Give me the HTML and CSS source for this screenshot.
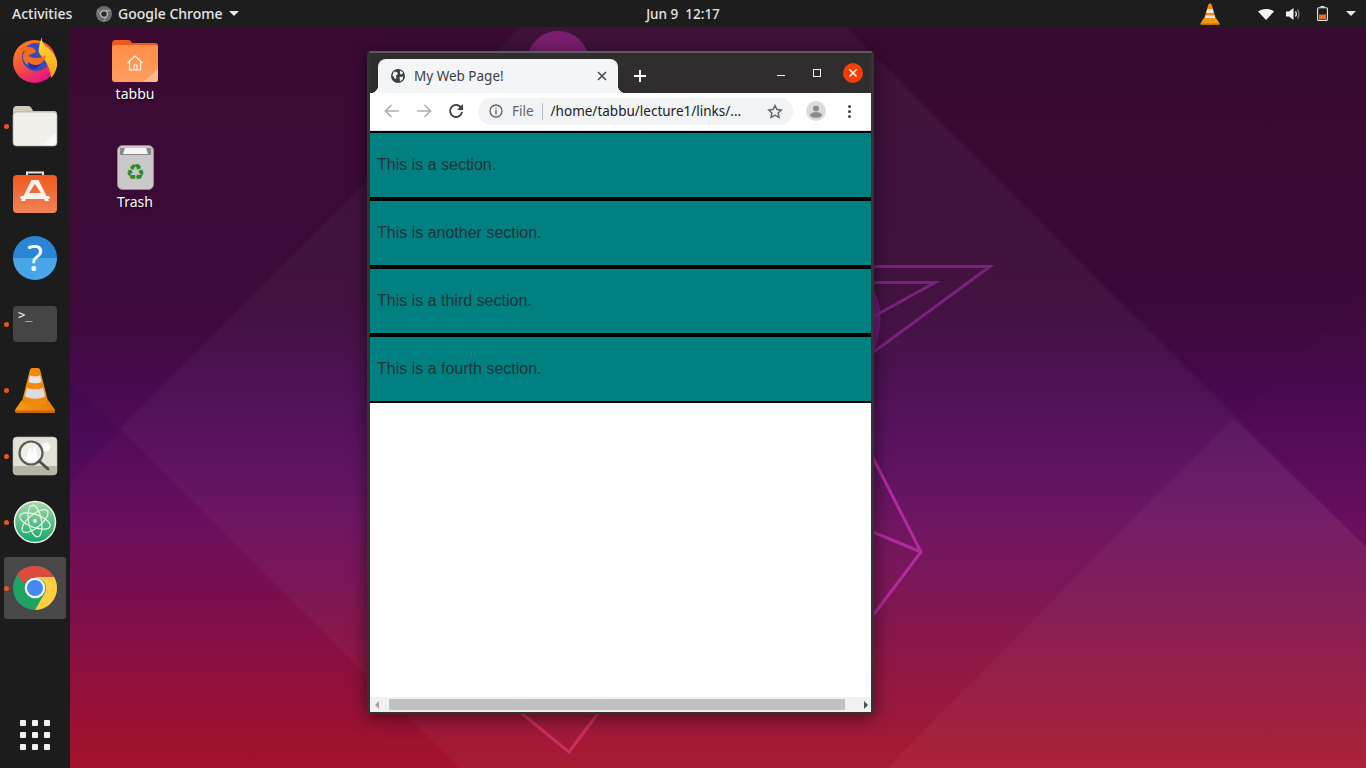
FILE: index.html
```html
<!DOCTYPE html>
<html lang="en">
<head>
<meta charset="UTF-8">
<meta name="viewport" content="width=device-width, initial-scale=1.0">
<title>My Web Page!</title>
<link rel="stylesheet" href="styles.css">
</head>
<body>
  <div class="screen">
    <!-- Top bar -->
    <header class="topbar">
      <div class="topbar-left">
        <span class="activities">Activities</span>
        <span class="app-menu">
          <svg class="app-menu-icon" width="16" height="16" viewBox="0 0 16 16">
            <circle cx="8" cy="8" r="8" fill="#6d6d6d"/>
            <circle cx="8" cy="8" r="3.4" fill="#2a2a2a" stroke="#c4c4c4" stroke-width="1.2"/>
            <path d="M8 4.6H15M5 9.7L1.6 3.6M11 9.7L7.6 15.8" stroke="#a8a8a8" stroke-width="1" fill="none"/>
          </svg>
          Google Chrome
          <span class="caret"></span>
        </span>
      </div>
      <div class="clock">Jun 9&nbsp;&nbsp;12:17</div>
      <div class="tray">
        <svg class="tray-vlc" width="20" height="22" viewBox="0 0 40 44">
          <path d="M20 1c2 0 3 1 3.5 3L32 32H8L16.500 4C17 2 18 1 20 1z" fill="#f08a0c"/>
          <path d="M14.500 12h11l2 8h-15zM11 25h18l1.500 5h-21z" fill="#e8e8e8"/>
          <path d="M7 31h26l6 10c.5 1 0 2-1 2H2c-1 0-1.500-1-1-2z" fill="#f39a12"/>
          <path d="M1 41h38l-1 3H2z" fill="#c76a08"/>
        </svg>
        <svg class="tray-wifi" width="16" height="12" viewBox="0 0 16 12"><path d="M0 3.500C4 0 12 0 16 3.500L8 12z" fill="#f2f2f2"/></svg>
        <svg class="tray-sound" width="15" height="14" viewBox="0 0 15 14">
          <path d="M0 4.500h3L7.500 1v12L3 9.500H0z" fill="#f2f2f2"/>
          <path d="M9.500 4.500c1 1.500 1 3.500 0 5" stroke="#f2f2f2" stroke-width="1.300" fill="none"/>
          <path d="M11.500 2.500c2 2.500 2 6.500 0 9" stroke="#8a8a8a" stroke-width="1.200" fill="none"/>
        </svg>
        <svg class="tray-battery" width="11" height="15" viewBox="0 0 11 15">
          <path d="M3.500 0h4v1.500h-4z" fill="#e8e8e8"/>
          <rect x=".6" y="1.800" width="9.800" height="12.600" rx="1" fill="none" stroke="#e8e8e8" stroke-width="1.100"/>
          <rect x="2" y="8.500" width="7" height="4.500" fill="#ee6a2c"/>
        </svg>
        <span class="caret tray-caret"></span>
      </div>
    </header>

    <div class="main">
      <!-- Dock -->
      <nav class="dock">
        <div class="dock-item">
          <svg width="46" height="46" viewBox="0 0 46 46">
            <defs>
              <linearGradient id="foxBody" x1="0" y1="0" x2=".6" y2="1">
                <stop offset="0" stop-color="#ff8a1f"/><stop offset=".55" stop-color="#f8503c"/><stop offset="1" stop-color="#e31587"/>
              </linearGradient>
              <linearGradient id="foxFlame" x1="0" y1="0" x2="0" y2="1">
                <stop offset="0" stop-color="#ffe32e"/><stop offset="1" stop-color="#ff9a1a"/>
              </linearGradient>
            </defs>
            <circle cx="22.500" cy="24.500" r="21.500" fill="url(#foxBody)"/>
            <circle cx="24" cy="20" r="14" fill="#3c49b8"/>
            <path d="M30 0c-1 5 2 8 7 12 6 5 9 11 8 17-1 5-3 9-6 12 0-2-2-14-8-20-3-3-5-6-4-10 .5-4 1.500-8 3-11z" fill="url(#foxFlame)"/>
            <path d="M4 8l3 5c3-3 7-4 11-3 4 1 6 3 6 5l-7 3c0 2 3 3 7 3 5 0 8-1 10-3-1 6-6 11-13 11-6 0-10-4-10-9 0-3 1-5 3-6-3 1-7 0-10-6z" fill="#f36b21"/>
            <path d="M16 25c3 3 8 4 13 2-2 3-4 5-8 5-3 0-5-3-5-7z" fill="#1e2fa8"/>
          </svg>
        </div>
        <div class="dock-item running">
          <svg width="46" height="42" viewBox="0 0 46 42">
            <path d="M1 5c0-2 1-4 4-4h11c2 0 3 1 4 3l1 2h21c2 0 3 1 3 3v6H1z" fill="#cfccbe"/>
            <rect x="1" y="7" width="44" height="34" rx="3.500" fill="#f2f0ea" stroke="#a9a798" stroke-width=".7"/>
            <path d="M44 28v9c0 2-1 3-3 3H30z" fill="#fbfaf8"/>
          </svg>
        </div>
        <div class="dock-item">
          <svg width="46" height="42" viewBox="0 0 46 42">
            <defs>
              <linearGradient id="shopBag" x1="0" y1="0" x2="0" y2="1">
                <stop offset="0" stop-color="#ef5a1e"/><stop offset="1" stop-color="#f08356"/>
              </linearGradient>
            </defs>
            <path d="M15 5V1.500h16V5" fill="none" stroke="#f2ddd2" stroke-width="2"/>
            <rect x="1" y="4" width="44" height="38" rx="4" fill="url(#shopBag)"/>
            <path d="M23 9l3.500 0L37 30h-4l-2-5H15l-2 5H9L19.500 9zM22.800 13L17 22h12z" fill="#fdf3ee"/>
            <rect x="8" y="25" width="30" height="3" rx="1.500" fill="#fdf3ee"/>
          </svg>
        </div>
        <div class="dock-item">
          <span class="help-icon">?</span>
        </div>
        <div class="dock-item running">
          <span class="terminal-icon">&gt;_</span>
        </div>
        <div class="dock-item running">
          <svg width="42" height="46" viewBox="0 0 40 44">
            <defs>
              <linearGradient id="coneBase" x1="0" y1="0" x2="1" y2="0">
                <stop offset="0" stop-color="#f59c14"/><stop offset="1" stop-color="#ee7a05"/>
              </linearGradient>
            </defs>
            <path d="M7 32h26l6 9c.5 1 0 1.500-1 1.500H2c-1 0-1.500-.5-1-1.500z" fill="url(#coneBase)"/>
            <path d="M1 41.500h38V43c0 .5-.5 1-1 1H2c-.5 0-1-.5-1-1z" fill="#c4670a"/>
            <path d="M17 1h6c1 0 1.500 1 2 2l7 28c.5 4-5 6-12 6S7 35 8 31l7-28c.5-1 1-2 2-2z" fill="#f08a0c"/>
            <path d="M15.200 8c2 1.500 7.500 1.500 9.600 0l1.400 6c-3 2-9.400 2-12.400 0z" fill="#e6e6e6"/>
            <path d="M12.300 19.500c3 2.500 12.400 2.500 15.400 0l2 8.500c-4 3-15.400 3-19.400 0z" fill="#dcdcdc"/>
          </svg>
        </div>
        <div class="dock-item running">
          <svg width="46" height="40" viewBox="0 0 46 40">
            <rect x="1" y="1" width="44" height="38" rx="4" fill="#e4e2d8" stroke="#bdbbae" stroke-width=".6"/>
            <path d="M1 30h44v5c0 2-2 4-4 4H5c-2 0-4-2-4-4z" fill="#b8b5a6"/>
            <circle cx="34" cy="11" r="4.500" fill="#fafaf6"/>
            <circle cx="19" cy="17" r="11.500" fill="#efeee8" stroke="#5a5a58" stroke-width="2.200"/>
            <path d="M13 25l5-14 2 7 3-9 3 16z" fill="#fff"/>
            <path d="M27 25l9 8" stroke="#4e4e4c" stroke-width="3" stroke-linecap="round"/>
          </svg>
        </div>
        <div class="dock-item running">
          <svg width="44" height="44" viewBox="0 0 44 44">
            <defs>
              <linearGradient id="atomBg" x1="0" y1="0" x2="0" y2="1">
                <stop offset="0" stop-color="#a8d9a4"/><stop offset="1" stop-color="#10a66d"/>
              </linearGradient>
            </defs>
            <circle cx="22" cy="22" r="20.500" fill="url(#atomBg)" stroke="#eef2ee" stroke-width="1.500"/>
            <g fill="none" stroke="#e8f5ea" stroke-width="1.200">
              <ellipse cx="22" cy="21" rx="16" ry="6.500" transform="rotate(20 22 21)"/>
              <ellipse cx="22" cy="21" rx="16" ry="6.500" transform="rotate(80 22 21)"/>
              <ellipse cx="22" cy="21" rx="16" ry="6.500" transform="rotate(140 22 21)"/>
            </g>
            <circle cx="22" cy="21" r="2" fill="#e8f5ea"/>
          </svg>
        </div>
        <div class="dock-item running active">
          <svg width="44" height="44" viewBox="0 0 44 44">
            <circle cx="22" cy="22" r="22" fill="#1ea362"/>
            <path d="M22 0a22 22 0 0 1 19.050 11H22a11 11 0 0 0-10.500 7.500L4 8.300A22 22 0 0 1 22 0z" fill="#dd4b3e"/>
            <path d="M41.050 11A22 22 0 0 1 22 44l9.500-16.500A11 11 0 0 0 29.800 14.300L22 11z" fill="#ffcd40"/>
            <circle cx="22" cy="22" r="10.300" fill="#f5f5f5"/>
            <circle cx="22" cy="22" r="8" fill="#4688f1"/>
          </svg>
        </div>
        <div class="apps-grid">
          <span></span><span></span><span></span>
          <span></span><span></span><span></span>
          <span></span><span></span><span></span>
        </div>
      </nav>

      <!-- Desktop -->
      <main class="desktop">
        <svg class="wallpaper" width="1296" height="741" viewBox="70 27 1296 741">
          <defs>
            <linearGradient id="wallBase" gradientUnits="userSpaceOnUse" x1="0" y1="27" x2="0" y2="768">
              <stop offset="0" stop-color="#3a0a33"/>
              <stop offset=".37" stop-color="#3d0a3a"/>
              <stop offset=".48" stop-color="#480a4e"/>
              <stop offset=".57" stop-color="#560b5b"/>
              <stop offset=".66" stop-color="#680e5e"/>
              <stop offset=".77" stop-color="#7a0f4e"/>
              <stop offset=".88" stop-color="#90103c"/>
              <stop offset="1" stop-color="#a5122b"/>
            </linearGradient>
          </defs>
          <rect x="70" y="27" width="1296" height="741" fill="url(#wallBase)"/>
          <polygon points="846,27 1366,27 1366,292 1233,422" fill="#000" opacity=".02"/>
          <polygon points="520,27 846,27 1366,547 1366,768 459,768 120,429" fill="#fff" opacity=".035"/>
          <polygon points="1233,418 1366,547 1366,768 887,768" fill="#fff" opacity=".035"/>
          <polygon points="70,380 120,429 70,483" fill="#1a0a50" opacity=".12"/>
          <ellipse cx="558" cy="62" rx="31" ry="31" fill="#7a1e6e"/>
          <path d="M860 270C880 290 888 320 872 356H860z" fill="#6c1a74"/>
          <g fill="none" stroke-width="3">
            <path d="M860 266.500H990L860 362" stroke="#7a2180"/>
            <path d="M860 282.500H935L860 324" stroke="#7a2180"/>
            <path d="M868 448L921 552 868 622" stroke="#b02c9e"/>
            <path d="M868 530L921 552" stroke="#b02c9e"/>
            <path d="M520 712L569 752 599 712" stroke="#cb2d5c"/>
          </g>
        </svg>

        <div class="desk-icon desk-home">
          <svg width="46" height="42" viewBox="0 0 46 42">
            <defs>
              <linearGradient id="homeFolder" x1="0" y1="0" x2="0" y2="1">
                <stop offset="0" stop-color="#fe8f47"/><stop offset="1" stop-color="#ff9e60"/>
              </linearGradient>
            </defs>
            <path d="M0 4c0-2 1-4 3-4h13c2 0 3 1 4 3h23c2 0 3 1 3 3v10H0z" fill="#f2591c"/>
            <rect y="5" width="46" height="37" rx="3" fill="url(#homeFolder)"/>
            <path d="M46 29v10c0 2-1 3-3 3H31z" fill="#ffb98c"/>
            <path d="M15.500 23L23 16l7.500 7M17.500 21.500V30h11v-8.500M22 30v-5h3v5" fill="none" stroke="#fff3ea" stroke-width="1.200"/>
          </svg>
          <span class="desk-label">tabbu</span>
        </div>
        <div class="desk-icon desk-trash">
          <svg width="37" height="45" viewBox="0 0 37 45">
            <rect x=".5" y=".5" width="36" height="44" rx="5" fill="#c9c9c9" stroke="#8c8c8c"/>
            <path d="M3 3h31v7H3z" fill="#888"/>
            <path d="M6 9l2-6h21l2 6z" fill="#f5f5f5"/>
            <text class="trash-mark" x="18.500" y="35" text-anchor="middle">♻</text>
          </svg>
          <span class="desk-label">Trash</span>
        </div>

        <!-- Chrome window -->
        <section class="window">
          <div class="tabbar">
            <div class="tab">
              <svg width="14" height="14" viewBox="0 0 14 14">
                <circle cx="7" cy="7" r="7" fill="#3c4043"/>
                <path d="M3 2.500l3 .5 1 2-2 1.500L5.500 9 4 10 1.500 6zM9 1.500l3 2-1 2-2-.5zM8.500 8l3.500-.5 0 2.500-3 2.500z" fill="#f3f5f7"/>
              </svg>
              <span class="tab-title">My Web Page!</span>
              <svg class="tab-close" width="10" height="10" viewBox="0 0 10 10"><path d="M1 1l8 8M9 1l-8 8" stroke="#444" stroke-width="1.500"/></svg>
            </div>
            <svg class="new-tab" width="12" height="12" viewBox="0 0 12 12"><path d="M6 0v12M0 6h12" stroke="#fff" stroke-width="2"/></svg>
            <div class="win-controls">
              <span class="win-min"></span>
              <span class="win-max"></span>
              <span class="win-close">
                <svg width="10" height="10" viewBox="0 0 10 10"><path d="M1.500 1.500l7 7M8.500 1.500l-7 7" stroke="#fff" stroke-width="1.500"/></svg>
              </span>
            </div>
          </div>

          <div class="toolbar">
            <span class="tool-btn">
              <svg width="16" height="14" viewBox="0 0 16 14"><path d="M15 7H2M7.500 1L1.500 7l6 6" fill="none" stroke="#aeb0b3" stroke-width="1.700"/></svg>
            </span>
            <span class="tool-btn">
              <svg width="16" height="14" viewBox="0 0 16 14"><path d="M1 7h13M8.500 1l6 6-6 6" fill="none" stroke="#aeb0b3" stroke-width="1.700"/></svg>
            </span>
            <span class="tool-btn">
              <svg width="16" height="16" viewBox="0 0 16 16"><path d="M13.300 5A6 6 0 1 0 14 9" fill="none" stroke="#3c4043" stroke-width="1.800"/><path d="M15 1v6H9z" fill="#3c4043"/></svg>
            </span>
            <div class="omnibox">
              <svg width="14" height="14" viewBox="0 0 14 14">
                <circle cx="7" cy="7" r="6" fill="none" stroke="#5f6368" stroke-width="1.300"/>
                <path d="M7 6v4.500M7 3.500v1.300" stroke="#5f6368" stroke-width="1.400"/>
              </svg>
              <span class="omni-scheme">File</span>
              <span class="omni-url">/home/tabbu/lecture1/links/...</span>
              <svg class="omni-star" width="16" height="15" viewBox="0 0 16 15"><path d="M8 1.500l1.900 4 4.400.5-3.200 3 .9 4.400L8 11.200 4 13.400l.9-4.400-3.200-3 4.400-.5z" fill="none" stroke="#5f6368" stroke-width="1.400"/></svg>
            </div>
            <span class="avatar">
              <svg width="20" height="20" viewBox="0 0 20 20">
                <circle cx="10" cy="10" r="10" fill="#dcdcdc"/>
                <circle cx="10" cy="7.500" r="3" fill="#8e8e8e"/>
                <ellipse cx="10" cy="14" rx="6" ry="3" fill="#8e8e8e"/>
              </svg>
            </span>
            <span class="menu-dots"><i></i><i></i><i></i></span>
          </div>

          <div class="page">
            <div class="section">This is a section.</div>
            <div class="section">This is another section.</div>
            <div class="section">This is a third section.</div>
            <div class="section">This is a fourth section.</div>
          </div>

          <div class="hscroll">
            <span class="arrow-left"></span>
            <span class="hscroll-thumb"></span>
            <span class="arrow-right"></span>
          </div>
        </section>
      </main>
    </div>
  </div>
</body>
</html>
```

FILE: styles.css
```css
html, body {
  margin: 0;
  padding: 0;
}

body {
  width: 1366px;
  height: 768px;
  overflow: hidden;
  font-family: "Noto Sans", sans-serif;
  background: #1c1c1c;
}

.screen {
  display: flex;
  flex-direction: column;
  height: 768px;
}

/* Top bar */
.topbar {
  display: grid;
  grid-template-columns: 1fr auto 1fr;
  align-items: center;
  height: 27px;
  flex: none;
  background: #1d1d1d;
  color: #e6e6e6;
  font-size: 14px;
  font-weight: 500;
}

.topbar-left {
  display: flex;
  align-items: center;
  padding-left: 12px;
}

.activities {
  width: 84px;
}

.app-menu {
  display: flex;
  align-items: center;
  gap: 6px;
}

.caret {
  width: 0;
  height: 0;
  margin-left: 0;
  border-left: 5px solid transparent;
  border-right: 5px solid transparent;
  border-top: 5px solid #e6e6e6;
}

.clock {
  font-size: 13.500px;
}

.tray {
  display: flex;
  align-items: center;
  justify-content: flex-end;
  padding-right: 10px;
}

.tray-vlc {
  margin-right: 38px;
}

.tray-wifi {
  margin-right: 12px;
}

.tray-sound {
  margin-right: 16px;
}

.tray-battery {
  margin-right: 18px;
}

/* Dock */
.main {
  display: flex;
  flex: 1;
  min-height: 0;
}

.dock {
  display: flex;
  flex-direction: column;
  align-items: center;
  width: 70px;
  flex: none;
  background: #1c1c1c;
}

.dock-item {
  position: relative;
  display: flex;
  align-items: center;
  justify-content: center;
  width: 62px;
  height: 62px;
  margin: 2px 0;
  border-radius: 3px;
}

.dock-item.running::before {
  content: "";
  position: absolute;
  left: -0.500px;
  top: 29px;
  width: 5px;
  height: 5px;
  border-radius: 50%;
  background: #e95420;
}

.dock-item.active {
  background: #484848;
}

.help-icon {
  width: 44px;
  height: 44px;
  border-radius: 50%;
  background: linear-gradient(#2a85d6 50%, #46a6e8 50%);
  color: #fff;
  font-size: 36px;
  line-height: 44px;
  text-align: center;
}

.terminal-icon {
  box-sizing: border-box;
  width: 44px;
  height: 36px;
  padding: 0 0 0 5px;
  border-radius: 4px;
  background: #454545;
  color: #f0f0f0;
  font-family: "DejaVu Sans Mono", monospace;
  font-size: 12px;
  line-height: 18px;
}

.apps-grid {
  display: grid;
  grid-template-columns: repeat(3, 6px);
  grid-auto-rows: 6px;
  gap: 6px;
  margin-top: auto;
  margin-bottom: 18px;
}

.apps-grid span {
  border-radius: 1px;
  background: #f2f2f2;
}

/* Desktop */
.desktop {
  position: relative;
  flex: 1;
  overflow: hidden;
}

.wallpaper {
  position: absolute;
  left: 0;
  top: 0;
}

.desk-icon {
  position: absolute;
  display: flex;
  flex-direction: column;
  align-items: center;
  width: 70px;
  color: #fff;
}

.desk-home {
  left: 30px;
  top: 13px;
}

.desk-trash {
  left: 30px;
  top: 118px;
}

.desk-label {
  margin-top: 2px;
  font-size: 14px;
  line-height: 20px;
  text-shadow: 0 1px 2px rgba(0, 0, 0, 0.8);
}

.trash-mark {
  font-family: "DejaVu Sans", sans-serif;
  font-size: 22px;
  fill: #2c8a2a;
}

/* Chrome window */
.window {
  position: absolute;
  left: 297px;
  top: 24px;
  box-sizing: border-box;
  display: flex;
  flex-direction: column;
  width: 507px;
  height: 663px;
  border: solid #333;
  border-width: 2px 3px;
  border-top-color: #5c5c5c;
  border-radius: 4px 4px 2px 2px;
  background: #fff;
  box-shadow: 0 3px 18px rgba(0, 0, 0, 0.55);
}

.tabbar {
  display: flex;
  align-items: flex-end;
  height: 40px;
  flex: none;
  padding-left: 8px;
  background: #2f2d2d;
}

.tab {
  position: relative;
  display: flex;
  align-items: center;
  box-sizing: border-box;
  width: 240px;
  height: 34px;
  padding: 0 11px 0 13px;
  border-radius: 8px 8px 0 0;
  background: #f3f5f7;
}

.tab::before,
.tab::after {
  content: "";
  position: absolute;
  bottom: 0;
  width: 8px;
  height: 8px;
}

.tab::before {
  left: -8px;
  background: radial-gradient(circle at 0 0, transparent 8px, #f3f5f7 8.500px);
}

.tab::after {
  right: -8px;
  background: radial-gradient(circle at 100% 0, transparent 8px, #f3f5f7 8.500px);
}

.tab-title {
  flex: 1;
  margin-left: 9px;
  color: #3c4043;
  font-size: 13.500px;
}

.new-tab {
  align-self: center;
  margin: 6px 0 0 16px;
}

.win-controls {
  display: flex;
  align-items: center;
  align-self: flex-start;
  height: 40px;
  margin-left: auto;
  padding-right: 8px;
}

.win-min {
  width: 8px;
  height: 1px;
  margin: 5px 28px 0 0;
  background: #f0f0f0;
}

.win-max {
  box-sizing: border-box;
  width: 8px;
  height: 8px;
  margin-right: 22px;
  margin-bottom: 0;
  border: 1px solid #f0f0f0;
}

.win-close {
  display: flex;
  align-items: center;
  justify-content: center;
  width: 20px;
  height: 20px;
  border-radius: 50%;
  background: #f63f04;
}

.toolbar {
  display: flex;
  align-items: center;
  box-sizing: border-box;
  height: 38px;
  flex: none;
  padding: 0 5px 1px 6px;
  border-bottom: 1px solid #e4e6e8;
  background: #fff;
}

.tool-btn {
  display: flex;
  align-items: center;
  justify-content: center;
  width: 32px;
}

.omnibox {
  display: flex;
  align-items: center;
  box-sizing: border-box;
  width: 315px;
  height: 27px;
  margin-left: 6px;
  padding: 0 10px 0 11px;
  border-radius: 14px;
  background: #f1f3f4;
}

.omni-scheme {
  margin-left: 9px;
  padding-right: 8px;
  border-right: 1px solid #b8babc;
  color: #5f6368;
  font-size: 13.500px;
  line-height: 17px;
}

.omni-url {
  flex: 1;
  margin-left: 8px;
  color: #202124;
  font-size: 13.500px;
  white-space: nowrap;
}

.avatar {
  display: flex;
  margin-left: 13px;
}

.menu-dots {
  display: flex;
  flex-direction: column;
  gap: 2px;
  margin-left: 22px;
}

.menu-dots i {
  width: 3px;
  height: 3px;
  border-radius: 50%;
  background: #444;
}

/* Page content */
.page {
  flex: 1;
  min-height: 0;
  background: #fff;
}

.section {
  height: 64px;
  padding: 0 5px;
  border: 2px solid #000;
  border-width: 2px 0;
  background: #008080;
  color: #22323a;
  font-family: "Liberation Sans", Arial, sans-serif;
  font-size: 16px;
  line-height: 63px;
  padding-left: 7px;
}

.hscroll {
  display: flex;
  align-items: center;
  height: 15px;
  flex: none;
  background: #f1f1f1;
}

.hscroll-thumb {
  width: 456px;
  height: 11px;
  margin: 0 5px 0 4px;
  background: #c1c1c1;
}

.arrow-left,
.arrow-right {
  width: 0;
  height: 0;
  border-top: 4px solid transparent;
  border-bottom: 4px solid transparent;
}

.arrow-left {
  margin-left: 5px;
  border-right: 4px solid #a3a3a3;
  margin-right: 6px;
}

.arrow-right {
  margin-left: 14px;
  border-left: 4px solid #505050;
}
```
